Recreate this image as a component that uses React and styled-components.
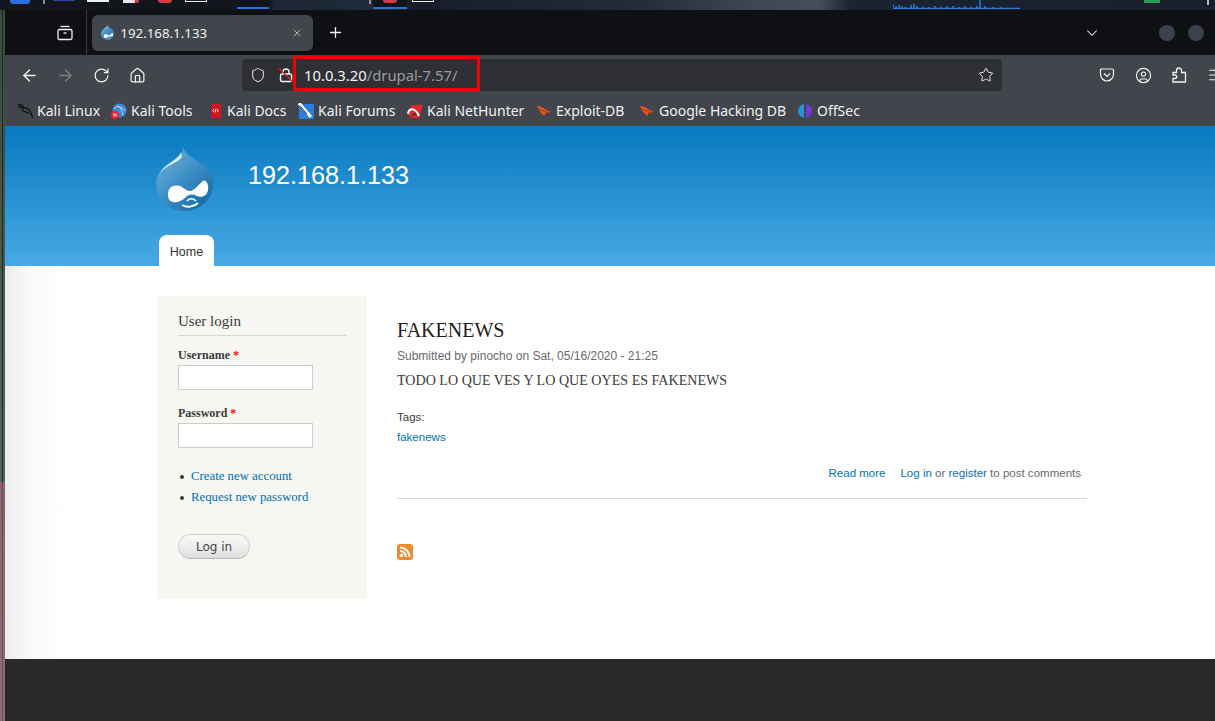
import React from "react";
import styled, { createGlobalStyle } from "styled-components";
import {
  ArrowLeft,
  ArrowRight,
  RotateCw,
  House,
  Shield,
  Star,
  X,
  Plus,
  ChevronDown,
  CircleUser,
  Menu,
} from "lucide-react";

const GlobalStyle = createGlobalStyle`
  html, body {
    margin: 0;
    padding: 0;
    width: 100%;
    height: 100%;
    overflow: hidden;
    background: #292929;
  }
`;

const Screen = styled.div`
  width: 1215px;
  height: 721px;
  display: flex;
  flex-direction: column;
  overflow: hidden;
`;

const Taskbar = styled.div`
  height: 10px;
  flex: none;
  display: flex;
  background: linear-gradient(
    90deg,
    #12151c 0,
    #12151c 269px,
    #1d2735 275px,
    #1f2a3a 370px,
    #171d28 420px,
    #242c39 640px,
    #3f4653 750px,
    #454c5a 820px,
    #1b2330 850px,
    #18202d 1215px
  );
  overflow: hidden;
`;

const TaskItem = styled.div`
  flex: none;
  width: ${(p) => p.$w}px;
  margin-left: ${(p) => p.$left}px;
  height: ${(p) => p.$h || 3}px;
  box-sizing: border-box;
  background: ${(p) => p.$color};
  border-radius: 0 0 ${(p) => p.$round || 0}px ${(p) => p.$round || 0}px;
`;

const OutlinedTask = styled.div`
  flex: none;
  width: 22px;
  height: 2px;
  margin-left: ${(p) => p.$left}px;
  box-sizing: border-box;
  border: solid #eee;
  border-width: 0 1px 1px;
  background: #14171d;
`;

const ActiveTask = styled.div`
  flex: none;
  width: ${(p) => p.$w}px;
  margin-left: ${(p) => p.$left}px;
  height: 9px;
  display: flex;
  justify-content: center;
  border-bottom: 2px solid #2a6fe0;
  box-sizing: border-box;
  background: #10141b;
`;

const TaskBadge = styled.div`
  width: 14px;
  height: 3px;
  border-radius: 0 0 8px 8px;
  background: #d83a48;
`;

const CpuGraph = styled.svg`
  flex: none;
  margin-left: ${(p) => p.$left}px;
  display: block;
`;

const Body = styled.div`
  flex: 1;
  display: flex;
  min-height: 0;
`;

const DesktopEdge = styled.div`
  width: 5px;
  flex: none;
  background:
    linear-gradient(180deg, #1d2a20 0, #1d2a20 66.400%, #a6343e 66.400%, #b32c36 100%) center / 1px 100% no-repeat,
    linear-gradient(180deg, #3b4a3e 0, #55665a 66.400%, #7d6a6e 66.400%, #807478 100%);
`;

const Browser = styled.div`
  flex: 1;
  min-width: 0;
  display: flex;
  flex-direction: column;
`;

const TabStrip = styled.div`
  height: 45px;
  flex: none;
  display: flex;
  align-items: center;
  background: #0e1014;
  color: #f2f2f2;
`;

const TabViewButton = styled.div`
  width: 82px;
  height: 45px;
  flex: none;
  display: flex;
  align-items: center;
  justify-content: flex-end;
  padding-right: 13px;
  box-sizing: border-box;
  border-right: 1px solid #3a3c42;
`;

const Tab = styled.div`
  width: 221px;
  height: 36px;
  margin-left: 5px;
  flex: none;
  box-sizing: border-box;
  padding: 0 10px 0 9px;
  display: flex;
  align-items: center;
  gap: 6px;
  background: #42454c;
  border-radius: 6px;
  font: 13.300px "Noto Sans", sans-serif;
  color: #f1f1f2;
`;

const TabTitle = styled.span`
  flex: 1;
`;

const NewTab = styled.div`
  width: 44px;
  flex: none;
  display: flex;
  justify-content: center;
`;

const StripEnd = styled.div`
  flex: 1;
  display: flex;
  align-items: center;
  justify-content: flex-end;
  padding-right: 11px;
`;

const ChevronWrap = styled.div`
  display: flex;
  margin-right: 45px;
`;

const WindowDot = styled.div`
  width: 16px;
  height: 16px;
  margin-left: 13px;
  border-radius: 50%;
  background: #3d414d;
`;

const Toolbar = styled.div`
  height: 40px;
  flex: none;
  display: flex;
  align-items: center;
  padding-left: 6px;
  background: #42454c;
  color: #f2f2f2;
  overflow: hidden;
`;

const ToolButton = styled.div`
  width: 36px;
  height: 32px;
  flex: none;
  display: flex;
  align-items: center;
  justify-content: center;
  color: ${(p) => (p.$disabled ? "#7d7f85" : "#f2f2f2")};
`;

const UrlBar = styled.div`
  position: relative;
  width: 760px;
  height: 32px;
  flex: none;
  margin: 0 87px;
  display: flex;
  align-items: center;
  box-sizing: border-box;
  padding: 0 8px;
  background: #2e3035;
  border-radius: 4px;
  font: 14.800px "Noto Sans", sans-serif;
`;

const UrlIcons = styled.div`
  width: 54px;
  flex: none;
  display: flex;
  align-items: center;
  gap: 12px;
`;

const UrlText = styled.div`
  flex: 1;
  color: #f4f4f5;
  white-space: nowrap;
`;

const UrlPath = styled.span`
  color: #9a9ba0;
`;

const Annotation = styled.div`
  position: absolute;
  left: 51px;
  top: -3px;
  width: 187px;
  height: 35px;
  box-sizing: border-box;
  border: 3px solid #f00000;
`;

const Bookmarks = styled.div`
  height: 31px;
  flex: none;
  display: flex;
  align-items: center;
  padding-left: 12px;
  background: #42454c;
  font: 14px "Noto Sans", sans-serif;
  color: #f1f1f2;
  white-space: nowrap;
`;

const Bookmark = styled.div`
  width: ${(p) => p.$w}px;
  flex: none;
  display: flex;
  align-items: center;
  gap: 4px;
`;

const Site = styled.div`
  flex: 1;
  min-height: 0;
  display: flex;
  flex-direction: column;
  background: #fff;
`;

const SiteHeader = styled.header`
  height: 140px;
  flex: none;
  box-sizing: border-box;
  padding: 21px 0 0 151px;
  display: flex;
  flex-direction: column;
  background: linear-gradient(180deg, #0779bf 0%, #48a9e4 100%);
`;

const Branding = styled.div`
  display: flex;
  height: 88px;
`;

const SiteName = styled.div`
  margin: 13px 0 0 35px;
  font: 25.200px/30px "Liberation Sans", Arial, sans-serif;
  color: #fffeff;
`;

const HomeTab = styled.div`
  width: 55px;
  height: 31px;
  box-sizing: border-box;
  padding-top: 2px;
  margin-left: 3px;
  display: flex;
  align-items: center;
  justify-content: center;
  background: #fff;
  border-radius: 8px 8px 0 0;
  font: 12.500px "Liberation Sans", Arial, sans-serif;
  color: #333;
`;

const Content = styled.div`
  flex: 1;
  min-height: 0;
  display: grid;
  grid-template-columns: 210px 690px;
  column-gap: 30px;
  align-items: start;
  padding: 30px 0 0 152px;
  background: linear-gradient(90deg, #ececec 0, #f9f9f9 26px, #fff 60px);
`;

const Sidebar = styled.aside`
  height: 303px;
  box-sizing: border-box;
  padding: 16px 21px 0;
  background: #f6f6f2;
  font-family: "Liberation Serif", "Times New Roman", serif;
  color: #3b3b3b;
`;

const BlockTitle = styled.h2`
  margin: 0 0 12px;
  padding-bottom: 5px;
  border-bottom: 1px solid #d6d6d6;
  font: 400 15px/18px "Liberation Serif", "Times New Roman", serif;
  color: #3b3b3b;
`;

const Field = styled.div`
  margin-bottom: 16px;
`;

const Label = styled.label`
  display: block;
  margin-bottom: 2px;
  font: 700 12px/15px "Liberation Serif", "Times New Roman", serif;
`;

const Required = styled.span`
  color: #f00;
`;

const TextInput = styled.input`
  display: block;
  width: 135px;
  height: 25px;
  box-sizing: border-box;
  padding: 0 4px;
  background: #fff;
  border: 1px solid #ccc;
  border-radius: 0;
  outline: none;
`;

const LinkList = styled.ul`
  list-style: none;
  margin: 18px 0 0;
  padding: 0;
`;

const LinkItem = styled.li`
  display: flex;
  align-items: center;
  height: 21px;
  font: 12.800px "Liberation Serif", "Times New Roman", serif;
  &::before {
    content: "";
    width: 4px;
    height: 4px;
    margin: 0 7px 0 2px;
    border-radius: 50%;
    background: #3b3b3b;
  }
`;

const Link = styled.a`
  color: #0071b3;
  text-decoration: none;
`;

const LoginButton = styled.button`
  display: block;
  width: 72px;
  height: 25px;
  margin-top: 26px;
  padding: 0;
  border: 1px solid #d0d0d0;
  border-bottom-color: #b8b8b8;
  border-radius: 13px;
  background: linear-gradient(180deg, #f8f8f8 0%, #ececec 60%, #dedede 100%);
  font: 12px "DejaVu Sans", Verdana, sans-serif;
  color: #444;
`;

const Main = styled.main`
  padding-top: 21px;
`;

const NodeTitle = styled.h1`
  margin: 0;
  font: 400 20px/26px "Liberation Serif", "Times New Roman", serif;
  color: #1e1e1e;
`;

const Submitted = styled.div`
  margin-top: 5px;
  font: 12px/16px "Liberation Sans", Arial, sans-serif;
  color: #68696b;
`;

const NodeBody = styled.p`
  margin: 7px 0 0;
  font: 14.080px/18px "Liberation Serif", "Times New Roman", serif;
  color: #3b3b3b;
`;

const Tags = styled.div`
  margin-top: 20px;
  font: 11.520px/16px "Liberation Sans", Arial, sans-serif;
  color: #3b3b3b;
`;

const TagLink = styled.div`
  margin-top: 4px;
`;

const NodeLinks = styled.div`
  margin-top: 20px;
  padding: 0 6px 17px 0;
  display: flex;
  justify-content: flex-end;
  gap: 15px;
  font: 11.520px/16px "Liberation Sans", Arial, sans-serif;
  color: #68696b;
  border-bottom: 1px solid #d6d6d6;
`;

const FeedIcon = styled.svg`
  display: block;
  margin-top: 45px;
`;

const Footer = styled.footer`
  height: 62px;
  flex: none;
  background: #292929;
`;

function DrupalDrop({ size, id }) {
  return (
    <svg width={size * (57 / 64)} height={size} viewBox="0 0 57 64">
      <defs>
        <linearGradient id={id} x1="0" y1="0" x2="0.9" y2="1">
          <stop offset="0" stopColor="#74b5de" />
          <stop offset="0.55" stopColor="#3a8cc4" />
          <stop offset="1" stopColor="#14679c" />
        </linearGradient>
      </defs>
      <path
        d="M27 0C27 8 21 11 14 16C6 21 0 27 0 37C0 53 13 64 28.500 64C44 64 57 52 57 37C57 26 50 20 43 15C36 10 29 7 27 0Z"
        fill={`url(#${id})`}
      />
      <path d="M25 5C24 10 16 14 10 19C6 22 4 26 4 26C10 18 22 16 26 10Z" fill="#dcecf6" />
      <path
        d="M12 47C12 40 18 37 24 39C28 41 31 44 34 44C38 44 42 38 47 34C50 32 53 38 52 43C51 49 46 51 41 49C37 47 33 47 30 50C26 54 21 56 17 55C13 54 12 51 12 47Z"
        fill="#fff"
      />
      <path d="M31 54C33 51 37 51 40 54" stroke="#fff" strokeWidth="1.500" fill="none" />
      <path d="M26 58C31 61 38 60 42 56" stroke="#fff" strokeWidth="1.800" fill="none" />
    </svg>
  );
}

function TabsIcon() {
  return (
    <svg width="16" height="16" viewBox="0 0 16 16" fill="none" stroke="#f2f2f2" strokeWidth="1.300">
      <path d="M3.500 1.500H12.500" />
      <rect x="1" y="4.500" width="14" height="10" rx="1.500" />
      <path d="M6.500 8H9.500" />
    </svg>
  );
}

function PocketIcon() {
  return (
    <svg width="16" height="16" viewBox="0 0 16 16" fill="none" stroke="#f2f2f2" strokeWidth="1.200">
      <path d="M2.500 2H13.500C14.100 2 14.500 2.400 14.500 3V7C14.500 11 11.500 14 8 14C4.500 14 1.500 11 1.500 7V3C1.500 2.400 1.900 2 2.500 2Z" />
      <path d="M5 6.500L8 9.500L11 6.500" />
    </svg>
  );
}

function ExtensionsIcon() {
  return (
    <svg width="16" height="16" viewBox="0 0 16 16" fill="none" stroke="#f2f2f2" strokeWidth="1.300">
      <path d="M5.500 5.500V3.500A2.500 2.500 0 0 1 10.500 3.500V5.500H14.500V15H2V11.500H4A1.700 1.700 0 0 0 4 8H2V5.500Z" />
    </svg>
  );
}

function InsecureLockIcon() {
  return (
    <svg width="16" height="16" viewBox="0 0 16 16" fill="none">
      <path d="M5 7V5A3 3 0 0 1 11 5V7" stroke="#f2f2f2" strokeWidth="1.400" />
      <rect x="2.500" y="7" width="11" height="7.500" rx="1.500" stroke="#f2f2f2" strokeWidth="1.400" />
      <path d="M1 1.500L15 15" stroke="#e0202c" strokeWidth="1.200" />
    </svg>
  );
}

function KaliIcon() {
  return (
    <svg width="16" height="16" viewBox="0 0 16 16" fill="none" stroke="#0b0b0b" strokeWidth="1.200">
      <path d="M1 1.500C4 1 6 3 7 5C9 4.500 12 5.500 13 8C14 10 15 12 15.500 15M7 5C5 6 5 8 7 8.500C9 9 11 9 12 11M1 4C3 3 4 4 5 5" />
    </svg>
  );
}

function ToolsIcon() {
  return (
    <svg width="16" height="16" viewBox="0 0 16 16">
      <circle cx="8.500" cy="7.500" r="7" fill="#3f88d8" />
      <path d="M3 6C6 2 10 3 14 8M6 3C9 4 11 7 12 12" stroke="#bfe0f8" strokeWidth="1" fill="none" />
      <circle cx="4" cy="12" r="4" fill="#e8262a" />
      <path d="M3 10.500V13.500M5 10.500V13.500" stroke="#fff" strokeWidth="1" />
    </svg>
  );
}

function DocsIcon() {
  return (
    <svg width="16" height="16" viewBox="0 0 16 16">
      <rect x="2" y="1" width="12" height="14" rx="1" fill="#d0161c" />
      <rect x="2" y="1" width="2" height="14" fill="#38406a" />
      <path d="M7 6L5.500 7.500L7 9M10 6L11.500 7.500L10 9M9 5.500L8 9.500" stroke="#fff" strokeWidth="0.900" fill="none" />
    </svg>
  );
}

function ForumsIcon() {
  return (
    <svg width="16" height="16" viewBox="0 0 16 16">
      <rect x="1" y="1" width="15" height="15" fill="#2b7de0" />
      <path d="M1 0L13 14" stroke="#f5f5f5" strokeWidth="3" />
      <path d="M2 3L9 11" stroke="#333" strokeWidth="1" />
    </svg>
  );
}

function NetHunterIcon() {
  return (
    <svg width="16" height="16" viewBox="0 0 16 16">
      <path d="M5 2H16L12 15H4L0 10Z" fill="#e3262e" />
      <path d="M1 11C2 5 8 4 12 13" stroke="#fff" strokeWidth="2" fill="none" />
      <path d="M6 13C6 10 8 10 9 12" stroke="#333" strokeWidth="1.500" fill="none" />
    </svg>
  );
}

function ExploitIcon() {
  return (
    <svg width="16" height="16" viewBox="0 0 16 16">
      <path d="M1 3C5 3 8 5 10 7L15 9L10 10L8 13C6 11 3 8 1 3Z" fill="#e2571e" />
      <path d="M3 6L12 10" stroke="#a83e12" strokeWidth="1" />
    </svg>
  );
}

function OffSecIcon() {
  return (
    <svg width="16" height="16" viewBox="0 0 16 16">
      <path d="M7 1C3 2 1 5 1 8C1 11 3 14 7 15Z" fill="#2a8fd8" />
      <path d="M9 1C13 2 15 5 15 8C15 11 13 14 9 15Z" fill="#6a3fd0" />
    </svg>
  );
}

const bookmarks = [
  { label: "Kali Linux", icon: <KaliIcon />, w: 94 },
  { label: "Kali Tools", icon: <ToolsIcon />, w: 96 },
  { label: "Kali Docs", icon: <DocsIcon />, w: 91 },
  { label: "Kali Forums", icon: <ForumsIcon />, w: 109 },
  { label: "Kali NetHunter", icon: <NetHunterIcon />, w: 129 },
  { label: "Exploit-DB", icon: <ExploitIcon />, w: 103 },
  { label: "Google Hacking DB", icon: <ExploitIcon />, w: 158 },
  { label: "OffSec", icon: <OffSecIcon />, w: 70 },
];

export default function App() {
  return (
    <Screen>
      <GlobalStyle />
      <Taskbar>
        <TaskItem $left={10} $w={20} $h={4} $color="#2a6fe0" $round={3} />
        <TaskItem $left={13} $w={2} $h={4} $color="#8c8f96" />
        <TaskItem $left={8} $w={22} $h={1} $color="#2a4690" />
        <TaskItem $left={12} $w={22} $h={2} $color="#f0f0f0" />
        <TaskItem $left={14} $w={12} $h={3} $color="#e8e8e8" />
        <TaskItem $left={0} $w={4} $h={3} $color="#d83a48" $round={3} />
        <TaskItem $left={19} $w={14} $h={3} $color="#d83a48" $round={8} />
        <OutlinedTask $left={13} />
        <ActiveTask $left={30} $w={32} />
        <TaskItem $left={100} $w={2} $h={4} $color="#8c8f96" />
        <ActiveTask $left={2} $w={34}>
          <TaskBadge />
        </ActiveTask>
        <OutlinedTask $left={5} />
        <CpuGraph $left={459} width="127" height="9" viewBox="0 0 127 9">
          <path
            d="M0 8V4M3 8V6M6 8V5M9 8V6M12 8V7M18 8V5M21 8V4M24 8V6M30 8V7M36 8V7M42 8V6M48 8V7M54 8V6M60 8V6M66 8V7M72 8V6M78 8V7M84 8V6M87 8V0M92 8V6M100 8V7M108 8V7M0 8.500H127"
            stroke="#2a7ae8"
            strokeWidth="1.500"
          />
        </CpuGraph>
        <TaskItem $left={124} $w={16} $h={3} $color="#2e9a58" />
        <TaskItem $left={47} $w={2} $h={5} $color="#b8b8b8" />
      </Taskbar>
      <Body>
        <DesktopEdge />
        <Browser>
          <TabStrip>
            <TabViewButton>
              <TabsIcon />
            </TabViewButton>
            <Tab>
              <DrupalDrop size={15} id="favicon-drop" />
              <TabTitle>192.168.1.133</TabTitle>
              <X size={12} color="#d8d8da" strokeWidth={1.5} />
            </Tab>
            <NewTab>
              <Plus size={17} strokeWidth={1.8} />
            </NewTab>
            <StripEnd>
              <ChevronWrap>
                <ChevronDown size={18} strokeWidth={1.4} />
              </ChevronWrap>
              <WindowDot />
              <WindowDot />
            </StripEnd>
          </TabStrip>
          <Toolbar>
            <ToolButton>
              <ArrowLeft size={19} strokeWidth={1.7} />
            </ToolButton>
            <ToolButton $disabled>
              <ArrowRight size={19} strokeWidth={1.7} />
            </ToolButton>
            <ToolButton>
              <RotateCw size={17} strokeWidth={1.7} />
            </ToolButton>
            <ToolButton>
              <House size={17} strokeWidth={1.7} />
            </ToolButton>
            <UrlBar>
              <UrlIcons>
                <Shield size={16} color="#f2f2f2" strokeWidth={1.5} />
                <InsecureLockIcon />
              </UrlIcons>
              <UrlText>
                10.0.3.20<UrlPath>/drupal-7.57/</UrlPath>
              </UrlText>
              <Star size={16} color="#f2f2f2" strokeWidth={1.4} />
              <Annotation />
            </UrlBar>
            <ToolButton>
              <PocketIcon />
            </ToolButton>
            <ToolButton>
              <CircleUser size={17} strokeWidth={1.6} />
            </ToolButton>
            <ToolButton>
              <ExtensionsIcon />
            </ToolButton>
            <ToolButton>
              <Menu size={16} strokeWidth={1.6} />
            </ToolButton>
          </Toolbar>
          <Bookmarks>
            {bookmarks.map((b) => (
              <Bookmark key={b.label} $w={b.w}>
                {b.icon}
                <span>{b.label}</span>
              </Bookmark>
            ))}
          </Bookmarks>
          <Site>
            <SiteHeader>
              <Branding>
                <DrupalDrop size={64} id="logo-drop" />
                <SiteName>192.168.1.133</SiteName>
              </Branding>
              <HomeTab>Home</HomeTab>
            </SiteHeader>
            <Content>
              <Sidebar>
                <BlockTitle>User login</BlockTitle>
                <Field>
                  <Label>
                    Username <Required>*</Required>
                  </Label>
                  <TextInput type="text" />
                </Field>
                <Field>
                  <Label>
                    Password <Required>*</Required>
                  </Label>
                  <TextInput type="password" />
                </Field>
                <LinkList>
                  <LinkItem>
                    <Link href="#">Create new account</Link>
                  </LinkItem>
                  <LinkItem>
                    <Link href="#">Request new password</Link>
                  </LinkItem>
                </LinkList>
                <LoginButton>Log in</LoginButton>
              </Sidebar>
              <Main>
                <NodeTitle>FAKENEWS</NodeTitle>
                <Submitted>Submitted by pinocho on Sat, 05/16/2020 - 21:25</Submitted>
                <NodeBody>TODO LO QUE VES Y LO QUE OYES ES FAKENEWS</NodeBody>
                <Tags>
                  Tags:
                  <TagLink>
                    <Link href="#">fakenews</Link>
                  </TagLink>
                </Tags>
                <NodeLinks>
                  <Link href="#">Read more</Link>
                  <span>
                    <Link href="#">Log in</Link> or <Link href="#">register</Link> to post comments
                  </span>
                </NodeLinks>
                <FeedIcon width="16" height="16" viewBox="0 0 16 16">
                  <rect width="16" height="16" rx="3" fill="#ef8a2e" />
                  <circle cx="4.500" cy="11.500" r="1.800" fill="#fff" />
                  <path d="M3 7A6 6 0 0 1 9 13M3 3.500A9.500 9.500 0 0 1 12.500 13" stroke="#fff" strokeWidth="2" fill="none" />
                </FeedIcon>
              </Main>
            </Content>
            <Footer />
          </Site>
        </Browser>
      </Body>
    </Screen>
  );
}
